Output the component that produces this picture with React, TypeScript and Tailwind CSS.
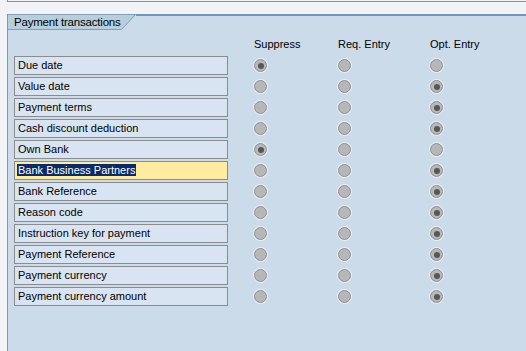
import React from "react";

const rows: { label: string; sel: number; active?: boolean }[] = [
  { label: "Due date", sel: 0 },
  { label: "Value date", sel: 2 },
  { label: "Payment terms", sel: 2 },
  { label: "Cash discount deduction", sel: 2 },
  { label: "Own Bank", sel: 0 },
  { label: "Bank Business Partners", sel: 2, active: true },
  { label: "Bank Reference", sel: 2 },
  { label: "Reason code", sel: 2 },
  { label: "Instruction key for payment", sel: 2 },
  { label: "Payment Reference", sel: 2 },
  { label: "Payment currency", sel: 2 },
  { label: "Payment currency amount", sel: 2 },
];

function Radio({ on }: { on: boolean }) {
  return (
    <div className="w-[13px] h-[13px] rounded-full bg-[#b7b7b7] border border-[#8f8f8f] shadow-[0_0_0_1px_#e8eef5] flex items-center justify-center">
      {on && <div className="w-[6px] h-[6px] rounded-full bg-[#575757]" />}
    </div>
  );
}

export default function App() {
  return (
    <div
      className="w-[526px] h-[351px] bg-[#f1f3f7] flex flex-col overflow-hidden text-black"
      style={{ fontFamily: '"Liberation Sans", Arial, sans-serif' }}
    >
      <div className="ml-[7px] h-[2px] border-l border-b border-[#7f92ab]" />
      <div className="h-[12px]" />
      <div className="ml-[7px] flex-1 border-l border-[#7b97b8] bg-[#cbdbea] flex flex-col">
        <div className="flex h-[16px]">
          <div className="w-[113px] h-[16px] bg-[#b7cfdc] border-t border-b border-[#7f9fbb] text-[11.5px] tracking-[-0.2px] leading-[14px] pl-[6px] whitespace-nowrap">
            Payment transactions
          </div>
          <svg width="15" height="16" viewBox="0 0 15 16" className="block">
            <polygon points="0,0.5 14.5,0.5 0.5,15.5 0,15.5" fill="#b7cfdc" />
            <line x1="0" y1="15.5" x2="0.5" y2="15.5" stroke="#7f9fbb" />
            <line x1="14.5" y1="0.5" x2="0.5" y2="15.5" stroke="#7f9fbb" />
            <line x1="0" y1="0.5" x2="15" y2="0.5" stroke="#7f9fbb" />
          </svg>
          <div className="flex-1 border-t-2 border-[#6f96c0]" />
        </div>
        <div className="flex text-[11px] leading-[13px] mt-[8px] h-[12px]">
          <div className="w-[246px]" />
          <div className="w-[84px]">Suppress</div>
          <div className="w-[92px]">Req. Entry</div>
          <div>Opt. Entry</div>
        </div>
        <div className="flex flex-col gap-[2px] mt-[6px] pl-[6px]">
          {rows.map((r) => (
            <div key={r.label} className="flex items-center h-[19px]">
              <div
                className={`w-[214px] h-[19px] border border-[#8c8c8c] text-[11px] leading-[15px] pl-[2px] pt-[1px] whitespace-nowrap ${
                  r.active ? "bg-[#ffec9f]" : "bg-[#d8e4f1]"
                }`}
              >
                {r.active ? (
                  <span className="bg-[#0b2a6a] text-white px-[1px]">{r.label}</span>
                ) : (
                  <span className="px-[1px]">{r.label}</span>
                )}
              </div>
              <div className="w-[26px]" />
              <div className="w-[84px]">
                <Radio on={r.sel === 0} />
              </div>
              <div className="w-[92px]">
                <Radio on={r.sel === 1} />
              </div>
              <div>
                <Radio on={r.sel === 2} />
              </div>
            </div>
          ))}
        </div>
      </div>
    </div>
  );
}
